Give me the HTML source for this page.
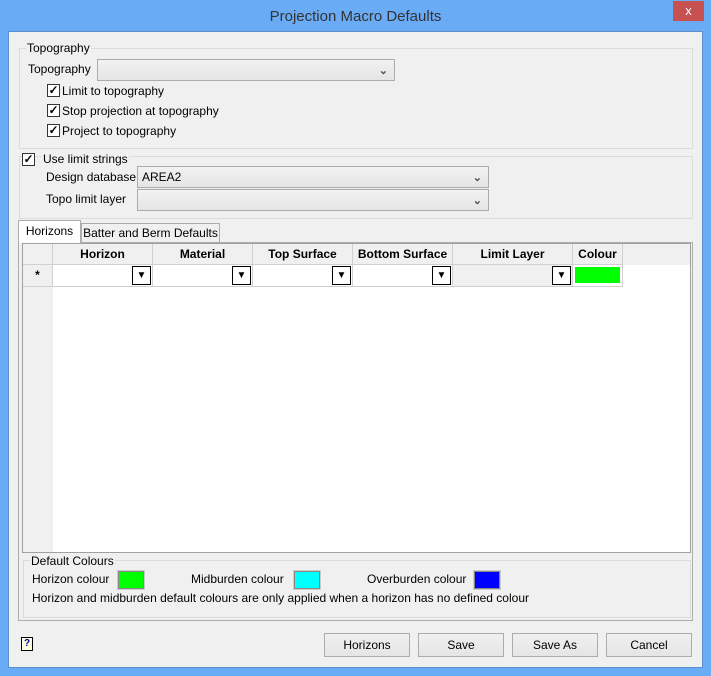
<!DOCTYPE html>
<html><head><style>
*{box-sizing:border-box;margin:0;padding:0}
body{width:711px;height:676px;background:#6aabf5;position:relative;overflow:hidden;font-family:"Liberation Sans",sans-serif;font-size:12px;color:#000}
.a{position:absolute}
.client{left:8px;top:31px;width:695px;height:637px;background:#f0f0f0;border:1px solid #5a8fd0}
.grp{border:1px solid #dcdcdc}
.leg{background:#f0f0f0;padding:0 1px;line-height:13px}
.cb{width:13px;height:13px;border:1px solid #333;background:#fff;font-size:12px;line-height:11px;text-align:center;font-weight:bold}
.combo{border:1px solid #acacac;background:linear-gradient(#f2f2f2,#e5e5e5);height:22px;padding-left:4px;line-height:20px}
.combo .ar{position:absolute;right:6px;top:1px;color:#555;font-size:11px;font-weight:bold}
.btn{border:1px solid #acacac;background:linear-gradient(#f0f0f0,#e5e5e5);height:24px;text-align:center;line-height:22px}
.hd{background:#f0f0f0;border-right:1px solid #d0d0d0;border-bottom:1px solid #d0d0d0;height:21px;font-weight:bold;text-align:center;line-height:20px}
.cell{border-right:1px solid #d0d0d0;border-bottom:1px solid #d0d0d0;height:22px;background:#fff}
.dd{position:absolute;right:1px;top:1px;width:19px;height:19px;border:1px solid #000;background:#fff;font-size:10px;text-align:center;line-height:17px}
.sw{border:1px solid #888;outline:1px solid #ccc;width:26px;height:18px}
</style></head><body>
<div class="a" style="left:0;top:1px;width:711px;height:31px;text-align:center;line-height:32px;font-size:15px;color:#333">Projection Macro Defaults</div>
<div class="a" style="left:673px;top:1px;width:31px;height:20px;background:#c75050;color:#fff;text-align:center;line-height:19px;font-size:13px">x</div>
<div class="a client"></div>

<div class="a grp" style="left:19px;top:48px;width:674px;height:101px"></div>
<div class="a leg" style="left:26px;top:42px">Topography</div>
<div class="a" style="left:28px;top:62px">Topography</div>
<div class="a combo" style="left:97px;top:59px;width:298px"><span class="ar">&#8964;</span></div>
<div class="a cb" style="left:47px;top:84px">✓</div><div class="a" style="left:62px;top:84px">Limit to topography</div>
<div class="a cb" style="left:47px;top:104px">✓</div><div class="a" style="left:62px;top:104px">Stop projection at topography</div>
<div class="a cb" style="left:47px;top:124px">✓</div><div class="a" style="left:62px;top:124px">Project to topography</div>

<div class="a grp" style="left:19px;top:156px;width:674px;height:63px"></div>
<div class="a cb" style="left:22px;top:153px">✓</div>
<div class="a leg" style="left:42px;top:153px">Use limit strings</div>
<div class="a" style="left:46px;top:170px">Design database</div>
<div class="a combo" style="left:137px;top:166px;width:352px">AREA2<span class="ar">&#8964;</span></div>
<div class="a" style="left:46px;top:192px">Topo limit layer</div>
<div class="a combo" style="left:137px;top:189px;width:352px"><span class="ar">&#8964;</span></div>

<div class="a" style="left:18px;top:242px;width:675px;height:379px;border:1px solid #adadad;background:#f0f0f0"></div>
<div class="a" style="left:81px;top:223px;width:139px;height:20px;border:1px solid #adadad;background:#f0f0f0;text-align:center;line-height:18px">Batter and Berm Defaults</div>
<div class="a" style="left:18px;top:220px;width:63px;height:23px;border:1px solid #adadad;border-bottom:none;background:#fff;text-align:center;line-height:21px">Horizons</div>

<div class="a" style="left:22px;top:243px;width:669px;height:310px;border:1px solid #a0a0a0;background:#fff"></div>
<div class="a" style="left:23px;top:244px;width:667px;height:21px;background:#f0f0f0"></div>
<div class="a" style="left:23px;top:244px;width:30px;height:308px;background:#f0f0f0"></div>
<div class="a hd" style="left:23px;top:244px;width:30px"></div>
<div class="a hd" style="left:53px;top:244px;width:100px">Horizon</div>
<div class="a hd" style="left:153px;top:244px;width:100px">Material</div>
<div class="a hd" style="left:253px;top:244px;width:100px">Top Surface</div>
<div class="a hd" style="left:353px;top:244px;width:100px">Bottom Surface</div>
<div class="a hd" style="left:453px;top:244px;width:120px">Limit Layer</div>
<div class="a hd" style="left:573px;top:244px;width:50px">Colour</div>
<div class="a cell" style="left:23px;top:265px;width:30px;background:#f0f0f0;text-align:center;line-height:20px;font-weight:bold">*</div>
<div class="a cell" style="left:53px;top:265px;width:100px"><div class="dd">▼</div></div>
<div class="a cell" style="left:153px;top:265px;width:100px"><div class="dd">▼</div></div>
<div class="a cell" style="left:253px;top:265px;width:100px"><div class="dd">▼</div></div>
<div class="a cell" style="left:353px;top:265px;width:100px"><div class="dd">▼</div></div>
<div class="a cell" style="left:453px;top:265px;width:120px;background:#f0f0f0"><div class="dd">▼</div></div>
<div class="a cell" style="left:573px;top:265px;width:50px"><div style="margin:2px;height:16px;background:#00ff00"></div></div>

<div class="a grp" style="left:23px;top:560px;width:668px;height:58px"></div>
<div class="a leg" style="left:30px;top:555px">Default Colours</div>
<div class="a" style="left:32px;top:572px">Horizon colour</div>
<div class="a sw" style="left:118px;top:571px;background:#00ff00"></div>
<div class="a" style="left:191px;top:572px">Midburden colour</div>
<div class="a sw" style="left:294px;top:571px;background:#00ffff"></div>
<div class="a" style="left:367px;top:572px">Overburden colour</div>
<div class="a sw" style="left:474px;top:571px;background:#0000ff"></div>
<div class="a" style="left:32px;top:591px">Horizon and midburden default colours are only applied when a horizon has no defined colour</div>

<div class="a" style="left:21px;top:637px;width:12px;height:14px;border:1px solid #000;background:#ffffe0;font-size:10px;font-weight:bold;color:#0000a0;text-align:center;line-height:12px">?</div>
<div class="a btn" style="left:324px;top:633px;width:86px">Horizons</div>
<div class="a btn" style="left:418px;top:633px;width:86px">Save</div>
<div class="a btn" style="left:512px;top:633px;width:86px">Save As</div>
<div class="a btn" style="left:606px;top:633px;width:86px">Cancel</div>
</body></html>
